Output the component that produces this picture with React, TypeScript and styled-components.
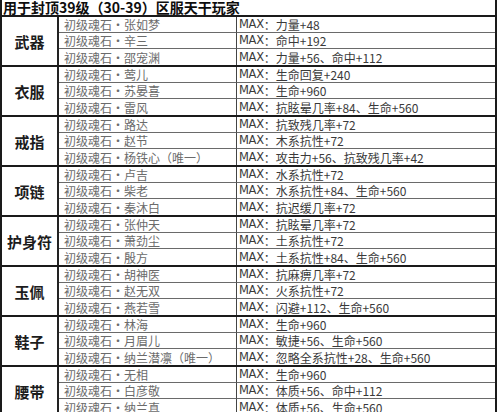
import React from "react";
import styled, { createGlobalStyle } from "styled-components";

const GlobalStyle = createGlobalStyle`
  html, body {
    margin: 0;
    padding: 0;
    background: #ffffff;
  }
  body {
    font-family: "Liberation Sans", "Noto Sans CJK SC", sans-serif;
    overflow: hidden;
  }
`;

const groups = [
  {
    slot: "武器",
    rows: [
      ["张如梦", "力量+48"],
      ["辛三", "命中+192"],
      ["邵宠渊", "力量+56、命中+112"],
    ],
  },
  {
    slot: "衣服",
    rows: [
      ["莺儿", "生命回复+240"],
      ["苏晏喜", "生命+960"],
      ["雷风", "抗眩晕几率+84、生命+560"],
    ],
  },
  {
    slot: "戒指",
    rows: [
      ["路达", "抗致残几率+72"],
      ["赵节", "木系抗性+72"],
      ["杨铁心（唯一）", "攻击力+56、抗致残几率+42"],
    ],
  },
  {
    slot: "项链",
    rows: [
      ["卢吉", "水系抗性+72"],
      ["柴老", "水系抗性+84、生命+560"],
      ["秦沐白", "抗迟缓几率+72"],
    ],
  },
  {
    slot: "护身符",
    rows: [
      ["张仲天", "抗眩晕几率+72"],
      ["萧劲尘", "土系抗性+72"],
      ["殷方", "土系抗性+84、生命+560"],
    ],
  },
  {
    slot: "玉佩",
    rows: [
      ["胡神医", "抗麻痹几率+72"],
      ["赵无双", "火系抗性+72"],
      ["燕若雪", "闪避+112、生命+560"],
    ],
  },
  {
    slot: "鞋子",
    rows: [
      ["林海", "生命+960"],
      ["月眉儿", "敏捷+56、生命+560"],
      ["纳兰潜凛（唯一）", "忽略全系抗性+28、生命+560"],
    ],
  },
  {
    slot: "腰带",
    rows: [
      ["无相", "生命+960"],
      ["白彦敬", "体质+56、命中+112"],
      ["纳兰真", "体质+56、生命+560"],
    ],
  },
];

const Sheet = styled.div`
  width: 497px;
  box-sizing: border-box;
  border-left: 2px solid #1a1a1a;
  border-right: 2px solid #1a1a1a;
`;

const Title = styled.div`
  height: 17px;
  box-sizing: border-box;
  border-bottom: 2px solid #1a1a1a;
  font-family: "Noto Sans CJK SC", sans-serif;
  font-weight: 700;
  font-size: 14px;
  line-height: 15px;
  color: #0d0d0d;
  padding-left: 1px;
  white-space: nowrap;
`;

const Group = styled.div`
  display: grid;
  grid-template-columns: 57px 178px 1fr;
  grid-template-rows: repeat(3, 1fr);
  height: 50px;
  box-sizing: border-box;
  border-bottom: 2px solid #1a1a1a;
`;

const Slot = styled.div`
  grid-row: 1 / span 3;
  display: flex;
  align-items: center;
  justify-content: center;
  border-right: 2px solid #222;
  font-family: "Noto Sans CJK SC", sans-serif;
  font-size: 15px;
  font-weight: 700;
  color: #1c1c1c;
`;

const Cell = styled.div<{ $last: boolean; $name?: boolean }>`
  display: flex;
  align-items: center;
  box-sizing: border-box;
  padding-left: ${(p) => (p.$name ? "5px" : "2px")};
  border-bottom: ${(p) => (p.$last ? "none" : "1px solid #6a6a6a")};
  border-right: ${(p) => (p.$name ? "1px solid #444" : "none")};
  font-size: 12px;
  line-height: 15px;
  color: ${(p) => (p.$name ? "#6b6b6b" : "#3a3a3a")};
  white-space: nowrap;
`;

const Max = styled.span`
  font-family: "DejaVu Sans", sans-serif;
  font-size: 11.5px;
  letter-spacing: -0.3px;
`;

const Cjk = styled.span`
  font-family: "Noto Sans CJK SC", sans-serif;
`;

export default function App() {
  return (
    <>
      <GlobalStyle />
      <Sheet>
        <Title>用于封顶39级（30-39）区服天干玩家</Title>
        {groups.map((g) => (
          <Group key={g.slot}>
            <Slot>{g.slot}</Slot>
            {g.rows.map(([name, stat], i) => (
              <React.Fragment key={name}>
                <Cell $name $last={i === 2}>
                  <Cjk>初级魂石・{name}</Cjk>
                </Cell>
                <Cell $last={i === 2}>
                  <Max>MAX</Max>
                  <Cjk>：{stat}</Cjk>
                </Cell>
              </React.Fragment>
            ))}
          </Group>
        ))}
      </Sheet>
    </>
  );
}
